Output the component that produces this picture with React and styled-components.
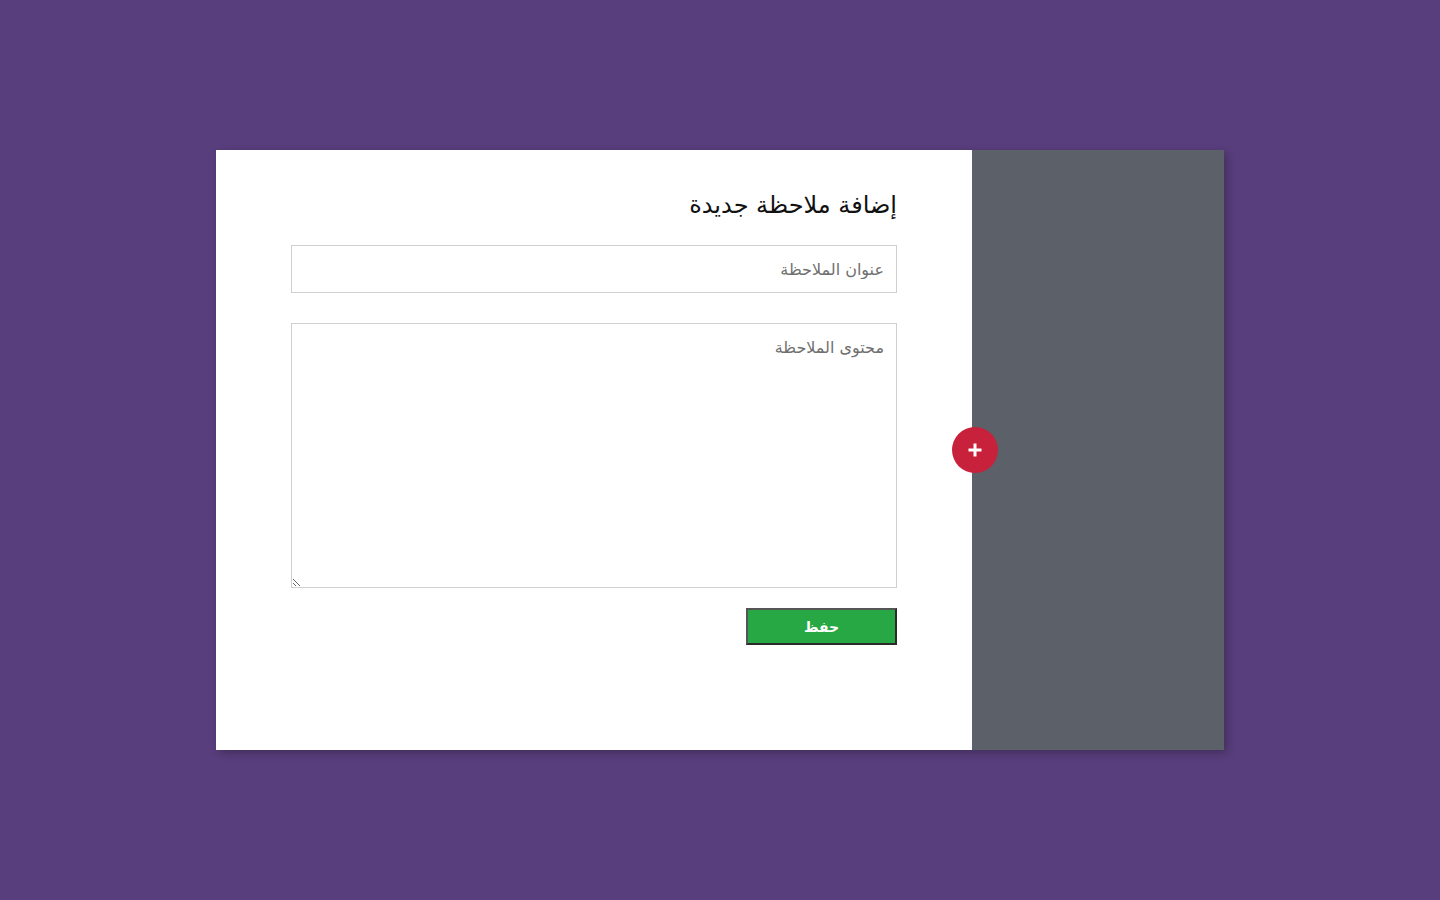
import React from "react";
import styled, { createGlobalStyle } from "styled-components";

const GlobalStyle = createGlobalStyle`
  * { box-sizing: border-box; }
  html, body {
    margin: 0;
    padding: 0;
    background: #583e7c;
    font-family: "DejaVu Sans", "Noto Sans", sans-serif;
  }
`;

const Page = styled.div`
  height: 100vh;
  display: flex;
  align-items: center;
  justify-content: center;
`;

const Card = styled.div`
  position: relative;
  width: 1008px;
  height: 600px;
  display: flex;
  box-shadow: 3px 3px 8px rgba(0, 0, 0, 0.25);
`;

const FormPanel = styled.div`
  width: 756px;
  background: #fff;
  padding: 39px 75px;
  direction: rtl;
`;

const SidePanel = styled.div`
  flex: 1;
  background: #5c6068;
`;

const Title = styled.h2`
  margin: 0 0 24px;
  font-size: 24px;
  font-weight: 500;
  line-height: 32px;
  color: #111;
`;

const Field = styled.input`
  display: block;
  width: 100%;
  height: 48px;
  border: 1px solid #d0d0d0;
  padding: 0 12px;
  font-family: inherit;
  font-size: 16px;
  color: #333;
  outline: none;
  &::placeholder { color: #6f6f6f; }
`;

const Area = styled.textarea`
  display: block;
  width: 100%;
  height: 265px;
  margin-top: 30px;
  border: 1px solid #d0d0d0;
  padding: 14px 12px;
  font-family: inherit;
  font-size: 16px;
  color: #333;
  outline: none;
  &::placeholder { color: #6f6f6f; }
`;

const SaveButton = styled.button`
  display: block;
  margin-top: 20px;
  width: 151px;
  height: 37px;
  background: #28a745;
  border: 2px solid #2b2b2b;
  border-left-color: #555;
  border-top-color: #555;
  color: #fff;
  font-family: "DejaVu Sans", sans-serif;
  font-weight: bold;
  font-size: 14px;
  cursor: pointer;
`;

const AddButton = styled.button`
  position: absolute;
  left: 736px;
  top: 277px;
  width: 46px;
  height: 46px;
  border-radius: 50%;
  border: none;
  background: #c8213b;
  display: flex;
  align-items: center;
  justify-content: center;
  padding: 0;
  cursor: pointer;
`;

const PlusIcon = () => (
  <svg width="16" height="16" viewBox="0 0 16 16">
    <path d="M8 1.5v13M1.5 8h13" stroke="#fff" strokeWidth="3" />
  </svg>
);

export default function App() {
  return (
    <>
      <GlobalStyle />
      <Page>
        <Card>
          <FormPanel>
            <Title>إضافة ملاحظة جديدة</Title>
            <Field type="text" placeholder="عنوان الملاحظة" />
            <Area placeholder="محتوى الملاحظة" />
            <SaveButton>حفظ</SaveButton>
          </FormPanel>
          <SidePanel />
          <AddButton aria-label="add">
            <PlusIcon />
          </AddButton>
        </Card>
      </Page>
    </>
  );
}
